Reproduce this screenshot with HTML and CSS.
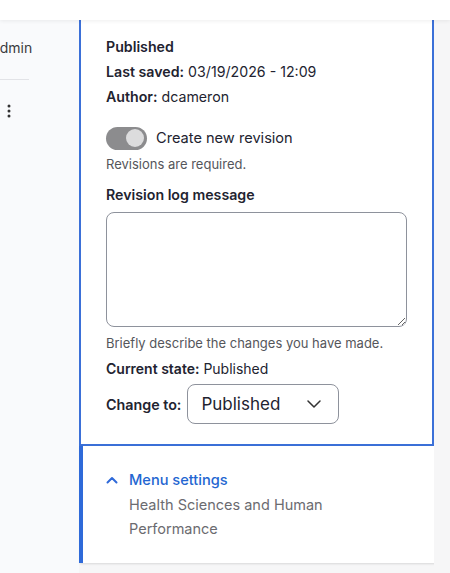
FILE: index.html
```html
<!DOCTYPE html>
<html lang="en">
<head>
<meta charset="utf-8">
<title>Node edit sidebar</title>
<link rel="stylesheet" href="styles.css">
</head>
<body>
<div class="topbar"></div>
<div class="layout">
  <aside class="sidebar">
    <div class="crumb"><span class="crumb-text">Admin</span></div>
    <div class="rule"></div>
    <div class="kebab">
      <svg width="6" height="14" viewBox="0 0 6 14"><circle cx="3" cy="2" r="1.5" fill="#333"/><circle cx="3" cy="7" r="1.5" fill="#333"/><circle cx="3" cy="12" r="1.5" fill="#333"/></svg>
    </div>
  </aside>
  <main class="column">
    <section class="panel">
      <div class="meta">
        <div class="meta-line"><strong>Published</strong></div>
        <div class="meta-line"><strong>Last saved:</strong> 03/19/2026 - 12:09</div>
        <div class="meta-line"><strong>Author:</strong> dcameron</div>
      </div>
      <div class="toggle-row">
        <span class="toggle"><span class="knob"></span></span>
        <span class="toggle-label">Create new revision</span>
      </div>
      <div class="help first-help">Revisions are required.</div>
      <div class="label">Revision log message</div>
      <textarea class="log" aria-label="Revision log message"></textarea>
      <div class="help after-area">Briefly describe the changes you have made.</div>
      <div class="state"><strong>Current state:</strong> Published</div>
      <div class="change-row">
        <span class="change-label">Change to:</span>
        <div class="select">
          <span class="select-value">Published</span>
          <svg width="14" height="8" viewBox="0 0 14 8"><path d="M1 1 L7 7 L13 1" fill="none" stroke="#333" stroke-width="1.5" stroke-linecap="round" stroke-linejoin="round"/></svg>
        </div>
      </div>
    </section>
    <section class="card">
      <div class="card-head">
        <svg class="chev" width="12" height="8" viewBox="0 0 12 8"><path d="M1.5 6.5 L6 2 L10.5 6.5" fill="none" stroke="#2f6ad9" stroke-width="2" stroke-linecap="round" stroke-linejoin="round"/></svg>
        <span class="card-title">Menu settings</span>
      </div>
      <div class="card-body">Health Sciences and Human<br>Performance</div>
    </section>
  </main>
  <div class="rest"></div>
</div>
</body>
</html>
```

FILE: styles.css
```css
html, body {
  margin: 0;
  padding: 0;
}
body {
  width: 450px;
  height: 573px;
  overflow: hidden;
  background: #f6f6f7;
  font-family: Inter, "Noto Sans", "Liberation Sans", sans-serif;
  color: #222330;
  display: flex;
  flex-direction: column;
}
.topbar {
  height: 20px;
  flex: none;
  background: #ffffff;
  box-shadow: 0 1px 4px rgba(0, 0, 0, 0.07);
  position: relative;
  z-index: 2;
}
.layout {
  display: flex;
  flex: 1;
  min-height: 0;
}
.sidebar {
  width: 79px;
  flex: none;
  background: #f9fafc;
  overflow: hidden;
}
.crumb {
  padding-top: 18px;
  height: 20px;
  line-height: 20px;
  font-size: 14px;
  color: #3b3b40;
  white-space: nowrap;
}
.crumb-text {
  display: inline-block;
  margin-left: -10px;
}
.rule {
  margin-top: 21px;
  width: 29px;
  height: 1px;
  background: #e2e3e7;
}
.kebab {
  margin-top: 24px;
  padding-left: 6px;
  height: 14px;
}
.kebab svg { display: block; }
.column {
  width: 355px;
  flex: none;
  display: flex;
  flex-direction: column;
}
.panel {
  background: #ffffff;
  border: 2px solid #3b70d8;
  border-top: none;
  padding: 14px 24px 20px 25px;
  font-size: 14px;
}
.meta-line {
  line-height: 25px;
  height: 25px;
  font-size: 14.2px;
}
.meta-line strong { font-weight: 600; }
.toggle-row {
  margin-top: 17px;
  display: flex;
  align-items: center;
  gap: 9px;
  height: 24px;
}
.toggle {
  width: 41px;
  height: 23px;
  border-radius: 12px;
  background: #8c8c8e;
  display: flex;
  align-items: center;
  justify-content: flex-end;
  padding-right: 3px;
  box-sizing: border-box;
}
.knob {
  width: 18px;
  height: 18px;
  border-radius: 50%;
  background: #dcdcdd;
}
.toggle-label {
  font-size: 14.6px;
  color: #222330;
}
.help {
  font-size: 13px;
  line-height: 18px;
  color: #55565b;
}
.first-help { margin-top: 5px; }
.label {
  margin-top: 12px;
  font-size: 14.2px;
  font-weight: 600;
  line-height: 20px;
}
.log {
  display: block;
  margin-top: 7px;
  width: 301px;
  height: 115px;
  box-sizing: border-box;
  border: 1px solid #8e929c;
  border-radius: 8px;
  background: #ffffff;
  resize: vertical;
  font-family: inherit;
}
.after-area { margin-top: 7px; }
.state {
  margin-top: 7px;
  line-height: 20px;
  font-size: 14px;
}
.state strong { font-weight: 600; }
.change-row {
  margin-top: 5px;
  display: flex;
  align-items: center;
  gap: 6px;
}
.change-label {
  font-size: 14.3px;
  font-weight: 600;
}
.select {
  width: 152px;
  height: 40px;
  box-sizing: border-box;
  border: 1px solid #8e929c;
  border-radius: 8px;
  display: flex;
  align-items: center;
  justify-content: space-between;
  padding: 0 17px 0 13px;
}
.select-value {
  font-size: 17px;
  color: #222330;
}
.select svg { display: block; }
.card {
  background: #ffffff;
  border-left: 4px solid #2f6ad9;
  padding: 22px 20px 22px 23px;
  box-shadow: 1px 1px 2px rgba(0, 0, 0, 0.12);
  margin-right: -1px;
}
.card-head {
  display: flex;
  align-items: center;
  height: 24px;
  gap: 11px;
}
.chev { display: block; }
.card-title {
  font-size: 14.6px;
  font-weight: 500;
  color: #2366d1;
}
.card-body {
  margin-top: 1px;
  padding-left: 23px;
  font-size: 14.5px;
  line-height: 24px;
  color: #6b6b70;
}
.rest {
  flex: 1;
  background: #f6f6f7;
}
```
